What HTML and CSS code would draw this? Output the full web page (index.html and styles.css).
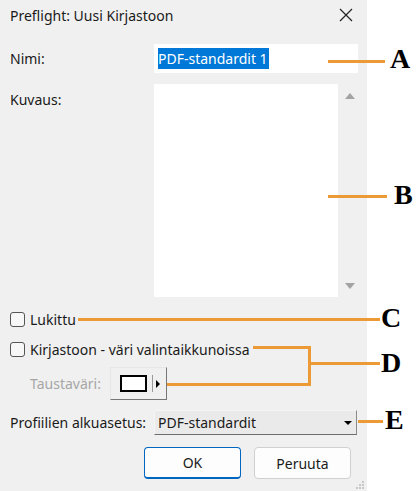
FILE: index.html
```html
<!DOCTYPE html>
<html lang="fi">
<head>
    <meta charset="UTF-8">
    <title>Preflight: Uusi Kirjastoon</title>
    <link rel="stylesheet" href="styles.css">
</head>
<body>
    <div class="page">
        <div class="dialog">
            <!-- Title bar -->
            <div class="titlebar">
                <span class="title">Preflight: Uusi Kirjastoon</span>
                <svg class="close" width="14" height="14" viewBox="0 0 14 14">
                    <path d="M1 1 L13 13 M13 1 L1 13" stroke="#222" stroke-width="1.2" fill="none"/>
                </svg>
            </div>

            <div class="content">
                <div class="row name-row">
                    <label>Nimi:</label>
                    <div class="field"><span class="sel">PDF-standardit 1</span></div>
                </div>

                <div class="row desc-row">
                    <label>Kuvaus:</label>
                    <div class="textarea-wrap">
                        <div class="textarea"></div>
                        <div class="scroll">
                            <span class="arrow-up"></span>
                            <span class="arrow-down"></span>
                        </div>
                    </div>
                </div>

                <div class="check-row lock-row">
                    <span class="box"></span>
                    <span>Lukittu</span>
                </div>

                <div class="check-row color-row">
                    <span class="box"></span>
                    <span>Kirjastoon - väri valintaikkunoissa</span>
                </div>

                <div class="bg-row">
                    <span class="disabled">Taustaväri:</span>
                    <div class="swatch-btn">
                        <span class="swatch"></span>
                        <span class="sep"></span>
                        <span class="tri-right"></span>
                    </div>
                </div>

                <div class="row profile-row">
                    <label>Profiilien alkuasetus:</label>
                    <div class="select">
                        <span>PDF-standardit</span>
                        <span class="tri-down"></span>
                    </div>
                </div>

                <div class="buttons">
                    <button class="btn btn-ok">OK</button>
                    <button class="btn">Peruuta</button>
                </div>
            </div>

            <svg class="grip" width="10" height="10" viewBox="0 0 10 10">
                <rect x="7" y="1" width="2" height="2" fill="#c8c8c8"/>
                <rect x="4" y="4" width="2" height="2" fill="#c8c8c8"/>
                <rect x="7" y="4" width="2" height="2" fill="#c8c8c8"/>
                <rect x="1" y="7" width="2" height="2" fill="#c8c8c8"/>
                <rect x="4" y="7" width="2" height="2" fill="#c8c8c8"/>
                <rect x="7" y="7" width="2" height="2" fill="#c8c8c8"/>
            </svg>
        </div>

        <!-- Callouts drawn over the screenshot -->
        <div class="line" style="left:328px; top:60px; width:57px; height:3px"></div>
        <div class="line" style="left:328px; top:195px; width:59px; height:3px"></div>
        <div class="line" style="left:78px; top:318px; width:302px; height:3px"></div>
        <div class="line" style="left:253px; top:346px; width:58px; height:3px"></div>
        <div class="line" style="left:308px; top:346px; width:3px; height:40px"></div>
        <div class="line" style="left:167px; top:383px; width:144px; height:3px"></div>
        <div class="line" style="left:308px; top:362px; width:72px; height:3px"></div>
        <div class="line" style="left:358px; top:420px; width:25px; height:3px"></div>

        <span class="letter" style="left:390px; top:44px">A</span>
        <span class="letter" style="left:394px; top:180px">B</span>
        <span class="letter" style="left:381px; top:303px">C</span>
        <span class="letter" style="left:381px; top:348px">D</span>
        <span class="letter" style="left:385px; top:405px">E</span>
    </div>
</body>
</html>
```

FILE: styles.css
```css
/* General */
body {
    margin: 0;
    background: #fff;
    font-family: "Noto Sans", sans-serif;
    font-size: 14px;
    color: #1a1a1a;
}

.page {
    position: relative;
    width: 417px;
    height: 491px;
}

.dialog {
    position: relative;
    width: 367px;
    height: 491px;
    background: #f0f0f0;
}

/* Title bar */
.titlebar {
    height: 30px;
    display: flex;
    align-items: center;
    justify-content: space-between;
    padding: 0 14px 0 10px;
    font-size: 14px;
}

.close {
    display: block;
}

.content {
    padding: 14px 9px 0 10px;
}

.row {
    display: grid;
    grid-template-columns: 144px 1fr;
    align-items: center;
}

/* Name */
.field {
    height: 29px;
    background: #fff;
    display: flex;
    align-items: center;
    padding-left: 4px;
}

.sel {
    background: #0078d7;
    color: #fff;
    line-height: 21px;
    font-size: 14px;
    padding-right: 1px;
}

/* Description */
.desc-row {
    margin-top: 11px;
    align-items: start;
}

.desc-row label {
    padding-top: 6px;
}

.textarea-wrap {
    display: flex;
    height: 213px;
}

.textarea {
    width: 184px;
    background: #fff;
}

.scroll {
    width: 23px;
    display: flex;
    flex-direction: column;
    justify-content: space-between;
    align-items: center;
    padding: 9px 0 8px;
}

.arrow-up,
.arrow-down {
    width: 0;
    height: 0;
    border-left: 5px solid transparent;
    border-right: 5px solid transparent;
}

.arrow-up {
    border-bottom: 6px solid #a3a3a3;
}

.arrow-down {
    border-top: 6px solid #a3a3a3;
}

/* Checkboxes */
.check-row {
    display: flex;
    align-items: center;
    gap: 5px;
    height: 20px;
}

.lock-row {
    margin-top: 12px;
}

.color-row {
    margin-top: 10px;
}

.box {
    width: 13px;
    height: 13px;
    border: 1px solid #555;
    border-radius: 3px;
    background: #f7f7f7;
}

/* Background colour */
.bg-row {
    display: flex;
    align-items: center;
    margin-top: 8px;
    padding-left: 20px;
}

.disabled {
    color: #a6a6a6;
    width: 80px;
}

.swatch-btn {
    width: 57px;
    height: 33px;
    border: 1px solid #e6e6e6;
    border-right-color: #777;
    border-bottom-color: #777;
    display: flex;
    align-items: center;
    padding-left: 9px;
    box-sizing: border-box;
}

.swatch {
    width: 27px;
    height: 17px;
    border: 2px solid #000;
    background: #fff;
    box-sizing: border-box;
}

.sep {
    width: 1px;
    height: 17px;
    background: #999;
    margin-left: 5px;
}

.tri-right {
    width: 0;
    height: 0;
    border-top: 4px solid transparent;
    border-bottom: 4px solid transparent;
    border-left: 4px solid #000;
    margin-left: 3px;
}

/* Profile dropdown */
.profile-row {
    margin-top: 10px;
}

.select {
    height: 25px;
    background: #eaeaea;
    border: 1px solid #f5f5f5;
    border-bottom-color: #6d6d6d;
    border-right-color: #8a8a8a;
    box-sizing: border-box;
    display: flex;
    align-items: center;
    justify-content: space-between;
    padding: 0 4px 0 3px;
    margin-right: 1px;
    font-size: 14px;
}

.tri-down {
    width: 0;
    height: 0;
    border-left: 4px solid transparent;
    border-right: 4px solid transparent;
    border-top: 4px solid #000;
}

/* Buttons */
.buttons {
    display: flex;
    justify-content: flex-end;
    gap: 13px;
    margin-top: 12px;
    padding-right: 7px;
}

.btn {
    width: 97px;
    height: 32px;
    border: 1px solid #d0d0d0;
    border-radius: 4px;
    background: #fdfdfd;
    font-family: "Noto Sans", sans-serif;
    font-size: 14px;
    color: #1a1a1a;
}

.btn-ok {
    border: 1px solid #0067c0;
    border-bottom-width: 2px;
}

.grip {
    position: absolute;
    right: 2px;
    bottom: 1px;
}

/* Callouts */
.line {
    position: absolute;
    background: #ec9a35;
}

.letter {
    position: absolute;
    font-family: "Liberation Serif", serif;
    font-weight: bold;
    font-size: 28px;
    line-height: 30px;
    color: #000;
}
```
